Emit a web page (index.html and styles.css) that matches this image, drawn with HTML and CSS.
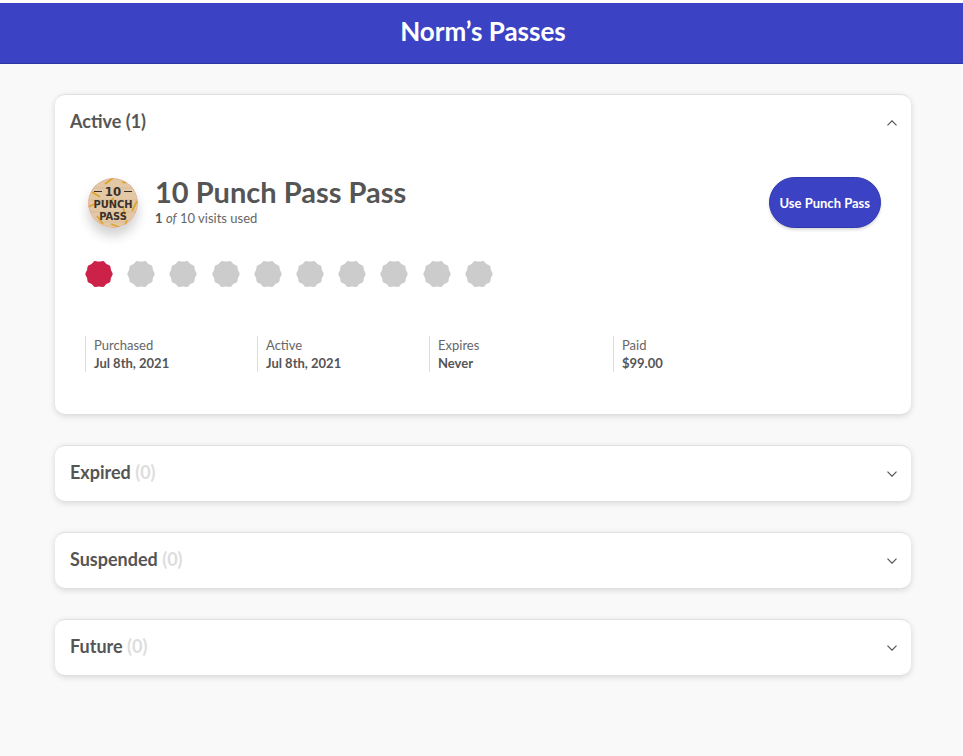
FILE: index.html
```html
<!DOCTYPE html>
<html lang="en">
<head>
    <meta charset="UTF-8">
    <meta name="viewport" content="width=device-width, initial-scale=1.0">
    <title>Norm’s Passes</title>
    <link rel="stylesheet" href="styles.css">
</head>
<body>
    <svg width="0" height="0" class="defs" aria-hidden="true">
        <symbol id="seal" viewBox="-14 -14 28 28">
            <path d="M13.6-.7V.7Q11.4 3.7 11.4 7.4L10.6 8.6Q6.9 9.5 4.9 12.7L3.5 13.1Q0 11.8-3.5 13.1L-4.9 12.7Q-6.9 9.5-10.6 8.6L-11.4 7.4Q-11.4 3.7-13.6.7V-.7Q-11.4-3.7-11.4-7.4L-10.6-8.6Q-6.9-9.5-4.9-12.7L-3.5-13.1Q0-11.8 3.5-13.1L4.9-12.7Q6.9-9.5 10.6-8.6L11.4-7.4Q11.4-3.7 13.6-.7Z"/>
        </symbol>
        <symbol id="chevron" viewBox="0 0 10 6">
            <path d="M.5.7 5 5.2 9.5.7" fill="none" stroke="currentColor" stroke-width="1.2"/>
        </symbol>
    </svg>

    <header class="header">
        <h1>Norm’s Passes</h1>
    </header>

    <main class="container">
        <details class="card" open>
            <summary>
                <h2>Active (1)</h2>
                <svg class="chevron"><use href="#chevron"/></svg>
            </summary>
            <div class="pass">
                <div class="pass-top">
                    <svg class="pass-logo" viewBox="0 0 50 50">
                        <clipPath id="round"><circle cx="25" cy="25" r="25"/></clipPath>
                        <g clip-path="url(#round)">
                            <rect width="50" height="50" fill="#e3c8a5"/>
                            <path d="M0 10H50M0 22H50M0 34H50M0 44H50" stroke="#d4b690" stroke-width=".6"/>
                            <path d="M17 6 25 0M4 14 12 19M0 29 7 26M20 25 26 20M49 23 44 33M9 38 15 46M23 46 31 49M37 47 39 42M35 29 37 37M34 4 38 5" stroke="#dba62b" stroke-width="1.8"/>
                        </g>
                        <circle cx="25" cy="25" r="24.7" fill="none" stroke="#e59a96" stroke-width=".6"/>
                        <path d="M6 13.5H14M36 13.5H44" stroke="#3a3029" stroke-width="1"/>
                        <g class="logo-text" text-anchor="middle">
                            <text x="25" y="18" font-size="13">10</text>
                            <text x="25" y="30" font-size="11">PUNCH</text>
                            <text x="25" y="42" font-size="11">PASS</text>
                        </g>
                    </svg>
                    <div class="pass-name">
                        <h3>10 Punch Pass Pass</h3>
                        <p><b>1</b> <i>of</i> 10 visits used</p>
                    </div>
                    <button type="button">Use Punch Pass</button>
                </div>

                <div class="punches">
                    <svg class="used"><use href="#seal"/></svg>
                    <svg><use href="#seal"/></svg>
                    <svg><use href="#seal"/></svg>
                    <svg><use href="#seal"/></svg>
                    <svg><use href="#seal"/></svg>
                    <svg><use href="#seal"/></svg>
                    <svg><use href="#seal"/></svg>
                    <svg><use href="#seal"/></svg>
                    <svg><use href="#seal"/></svg>
                    <svg><use href="#seal"/></svg>
                </div>

                <dl class="info">
                    <div>
                        <dt>Purchased</dt>
                        <dd>Jul 8th, 2021</dd>
                    </div>
                    <div>
                        <dt>Active</dt>
                        <dd>Jul 8th, 2021</dd>
                    </div>
                    <div>
                        <dt>Expires</dt>
                        <dd>Never</dd>
                    </div>
                    <div>
                        <dt>Paid</dt>
                        <dd>$99.00</dd>
                    </div>
                </dl>
            </div>
        </details>

        <details class="card">
            <summary>
                <h2>Expired <span>(0)</span></h2>
                <svg class="chevron"><use href="#chevron"/></svg>
            </summary>
        </details>

        <details class="card">
            <summary>
                <h2>Suspended <span>(0)</span></h2>
                <svg class="chevron"><use href="#chevron"/></svg>
            </summary>
        </details>

        <details class="card">
            <summary>
                <h2>Future <span>(0)</span></h2>
                <svg class="chevron"><use href="#chevron"/></svg>
            </summary>
        </details>
    </main>
</body>
</html>
```
FILE: styles.css
```css
* {
    box-sizing: border-box;
}
body {
    margin: 0;
    border-top: 3px solid #fff;
    background-color: #f9f9f9;
    color: #555;
    font-family: Lato, "Liberation Sans", sans-serif;
    font-size: 13px;
    line-height: 18px;
}
h1, h2, h3, p, dl, dd {
    margin: 0;
}
.defs {
    position: absolute;
}
.header {
    padding: 12px 0 16px 3px;
    background-color: #3b43c4;
    border-bottom: 1px solid #3038a8;
    color: #fff;
    text-align: center;
}
.header h1 {
    font-size: 26px;
    font-weight: 700;
    line-height: 32px;
}
.container {
    display: flex;
    flex-direction: column;
    gap: 31px;
    max-width: 1200px;
    margin: 0 auto;
    padding: 30px 52px 60px 55px;
}
.card {
    background-color: #fff;
    border-top: 1px solid #e0e0e0;
    border-radius: 10px;
    box-shadow: 0 2px 6px rgba(0, 0, 0, 0.15);
}
.card summary {
    display: flex;
    justify-content: space-between;
    align-items: center;
    height: 55px;
    padding: 0 14px 0 15px;
    cursor: pointer;
    list-style: none;
}
.card h2 {
    padding-bottom: 4px;
    font-size: 18px;
    font-weight: 700;
    line-height: 24px;
}
.card h2 span {
    color: #ddd;
}
.chevron {
    width: 10px;
    height: 6px;
    color: #555;
}
.card[open] .chevron {
    transform: rotate(180deg);
}
.pass {
    padding: 25px 30px 42px;
}
.pass-top {
    display: flex;
    align-items: center;
    gap: 17px;
}
.pass-logo {
    width: 50px;
    height: 50px;
    margin-left: 3px;
    border-radius: 50%;
    box-shadow: 0 8px 12px rgba(0, 0, 0, 0.18);
}
.logo-text {
    fill: #3a3029;
    font-family: "DejaVu Sans Condensed", "DejaVu Sans", sans-serif;
    font-weight: bold;
}
.pass-name {
    flex: 1;
    padding-bottom: 3px;
}
.pass-name h3 {
    font-size: 29px;
    font-weight: 700;
    line-height: 34px;
}
.pass-name p {
    color: #666;
}
.pass-name b {
    color: #555;
}
button {
    height: 51px;
    padding: 0 10px;
    background-color: #3b43c4;
    border: 1px solid #3038b0;
    border-radius: 26px;
    box-shadow: 0 2px 3px rgba(0, 0, 0, 0.15);
    color: #fff;
    font-family: inherit;
    font-size: 13px;
    font-weight: 700;
    cursor: pointer;
}
.punches {
    display: grid;
    grid-template-columns: repeat(10, 1fr);
    max-width: 422px;
    margin-top: 30px;
}
.punches svg {
    width: 28px;
    height: 28px;
    fill: #ccc;
}
.punches .used {
    fill: #cc2149;
}
.info {
    display: grid;
    grid-template-columns: 172px 172px 184px 1fr;
    margin-top: 48px;
}
.info div {
    padding-left: 8px;
    border-left: 1px solid #ddd;
}
.info dt {
    color: #666;
}
.info dd {
    font-weight: 700;
}
```
